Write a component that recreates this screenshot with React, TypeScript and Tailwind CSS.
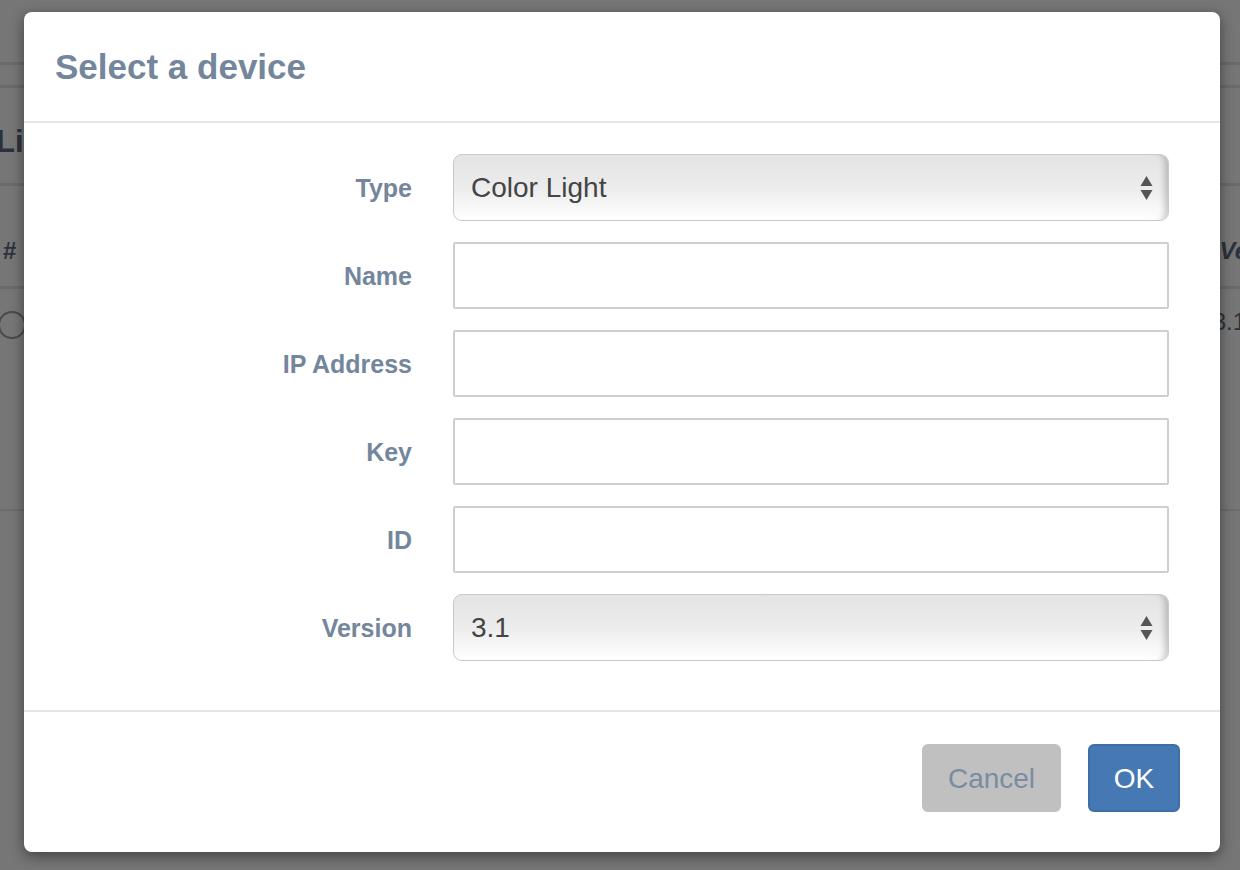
import React from "react";

const labelCls = "text-right text-[25px] font-bold text-[#74869b] pr-[41px] pt-[3px]";

function SelectBox({ value }: { value: string }) {
    return (
        <div className="relative flex h-[67px] items-center rounded-[9px] border border-[#c9c9c9] bg-gradient-to-b from-[#e4e4e4] via-[#ececec] to-white pl-[17px] shadow-[inset_-9px_0_7px_-6px_rgba(0,0,0,0.22)]">
            <span className="text-[28px] text-[#444]">{value}</span>
            {/* native select arrows */}
            <svg className="absolute right-[15px] top-1/2 -translate-y-1/2" width="13" height="26" viewBox="0 0 13 26">
                <path d="M6.5 1 L12.5 11 L0.5 11 Z" fill="#555" />
                <path d="M6.5 25 L12.5 15 L0.5 15 Z" fill="#555" />
            </svg>
        </div>
    );
}

function TextBox() {
    return <div className="h-[67px] rounded-[2px] border-2 border-[#cfcfcf] bg-white" />;
}

function FormRow({ label, children }: { label: string; children: React.ReactNode }) {
    return (
        <div className="grid grid-cols-[429px_1fr] items-center">
            <div className={labelCls}>{label}</div>
            {children}
        </div>
    );
}

export default function App() {
    return (
        <div className="relative h-[870px] w-[1240px] overflow-hidden bg-[#767676] font-['Liberation_Sans',Arial,sans-serif]">
            {/* Page behind the backdrop */}
            <div className="flex flex-col text-[#2b323c]">
                <div className="h-[62px]" />
                <div className="h-[3px] bg-[#6a6a6a]" />
                <div className="h-[20px]" />
                <div className="h-[3px] bg-[#6a6a6a]" />
                <div className="flex h-[95px] items-center pt-[14px]">
                    <span className="-ml-[4px] text-[31px] font-bold">List</span>
                </div>
                <div className="h-[3px] bg-[#6a6a6a]" />
                <div className="flex h-[100px] items-center justify-between pt-[30px]">
                    <span className="ml-[3px] text-[24px] font-bold">#</span>
                    <span className="-mr-[8px] text-[24px] font-bold italic">Ve</span>
                </div>
                <div className="h-[3px] bg-[#6a6a6a]" />
                <div className="flex h-[72px] items-center justify-between">
                    <span className="-ml-[2px] h-[28px] w-[28px] rounded-full border-2 border-[#4a4a4a]" />
                    <span className="-mr-[6px] pb-[6px] text-[24px]">3.1</span>
                </div>
                <div className="h-[148px]" />
                <div className="h-[2px] bg-[#6c6c6c]" />
            </div>

            {/* Modal */}
            <div className="absolute inset-0 flex justify-start pl-[24px] pt-[12px]">
                <div className="flex h-[840px] w-[1196px] flex-col rounded-[8px] bg-white shadow-[0_4px_14px_rgba(0,0,0,0.45)]">
                    <div className="flex h-[111px] items-center border-b-2 border-[#e5e5e5] px-[31px] pt-[2px]">
                        <h1 className="text-[35px] font-bold text-[#74869b]">Select a device</h1>
                    </div>

                    <div className="flex flex-col gap-[21px] pb-[49px] pl-0 pr-[51px] pt-[31px]">
                        <FormRow label="Type">
                            <SelectBox value="Color Light" />
                        </FormRow>
                        <FormRow label="Name">
                            <TextBox />
                        </FormRow>
                        <FormRow label="IP Address">
                            <TextBox />
                        </FormRow>
                        <FormRow label="Key">
                            <TextBox />
                        </FormRow>
                        <FormRow label="ID">
                            <TextBox />
                        </FormRow>
                        <FormRow label="Version">
                            <SelectBox value="3.1" />
                        </FormRow>
                    </div>

                    <div className="flex flex-1 items-start justify-end gap-[27px] border-t-2 border-[#e5e5e5] pr-[40px] pt-[32px]">
                        <button className="h-[68px] w-[139px] rounded-[6px] bg-[#c0c0c0] pt-[2px] text-[28px] text-[#7a8ca2]">
                            Cancel
                        </button>
                        <button className="h-[68px] w-[92px] rounded-[6px] border-2 border-[#3e6ea6] bg-[#4679b3] pt-[2px] text-[28px] text-white">
                            OK
                        </button>
                    </div>
                </div>
            </div>
        </div>
    );
}
